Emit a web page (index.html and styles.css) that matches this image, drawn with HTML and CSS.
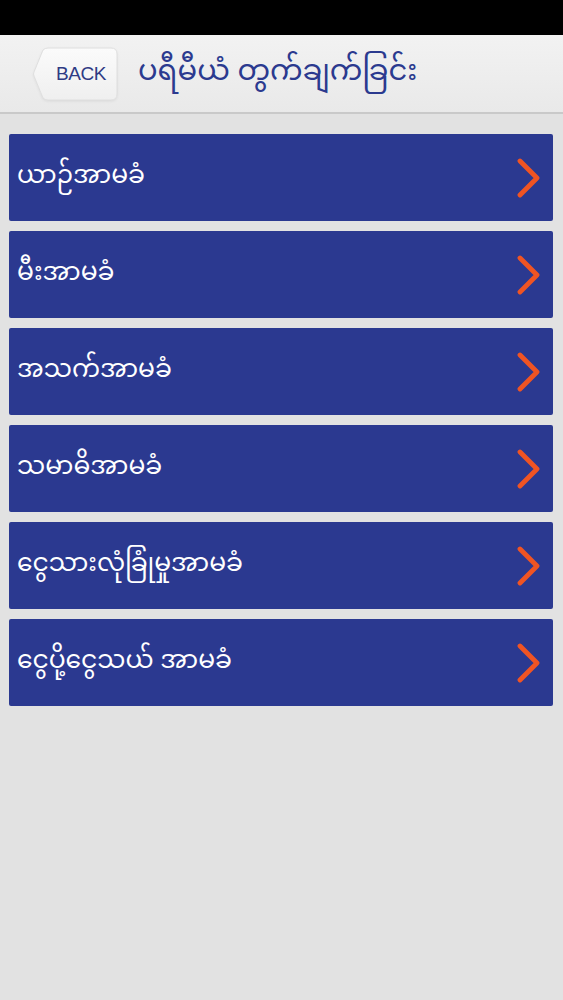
FILE: index.html
```html
<!DOCTYPE html>
<html lang="my">
<head>
    <meta charset="UTF-8">
    <meta name="viewport" content="width=device-width, initial-scale=1.0">
    <title>ပရီမီယံ တွက်ချက်ခြင်း</title>
    <link rel="stylesheet" href="styles.css">
</head>
<body>

<div class="status-bar"></div>

<div class="header">
    <a class="back-btn" href="#">
        <svg class="back-shape" width="88" height="56" viewBox="0 0 88 56">
            <defs>
                <linearGradient id="backGrad" x1="0" y1="0" x2="0" y2="1">
                    <stop offset="0" stop-color="#fbfbfb"/>
                    <stop offset="1" stop-color="#efefef"/>
                </linearGradient>
            </defs>
            <path d="M17 2 H80 Q86 2 86 8 V48 Q86 54 80 54 H17 Q14 54 12 52 L3 30 Q2 28 3 26 L12 4 Q14 2 17 2 Z"
                  fill="url(#backGrad)" stroke="#dedede" stroke-width="1"/>
        </svg>
        <span class="back-label">BACK</span>
    </a>
    <h1 class="title">ပရီမီယံ တွက်ချက်ခြင်း</h1>
</div>

<div class="menu">
    <a class="menu-item" href="#">
        <span class="menu-text">ယာဉ်အာမခံ</span>
        <svg class="chevron" width="24" height="40" viewBox="0 0 24 40"><path d="M3 3 L20 20 L3 37" /></svg>
    </a>
    <a class="menu-item" href="#">
        <span class="menu-text">မီးအာမခံ</span>
        <svg class="chevron" width="24" height="40" viewBox="0 0 24 40"><path d="M3 3 L20 20 L3 37" /></svg>
    </a>
    <a class="menu-item" href="#">
        <span class="menu-text">အသက်အာမခံ</span>
        <svg class="chevron" width="24" height="40" viewBox="0 0 24 40"><path d="M3 3 L20 20 L3 37" /></svg>
    </a>
    <a class="menu-item" href="#">
        <span class="menu-text">သမာဓိအာမခံ</span>
        <svg class="chevron" width="24" height="40" viewBox="0 0 24 40"><path d="M3 3 L20 20 L3 37" /></svg>
    </a>
    <a class="menu-item" href="#">
        <span class="menu-text">ငွေသားလုံခြုံမှုအာမခံ</span>
        <svg class="chevron" width="24" height="40" viewBox="0 0 24 40"><path d="M3 3 L20 20 L3 37" /></svg>
    </a>
    <a class="menu-item" href="#">
        <span class="menu-text">ငွေပို့ငွေသယ် အာမခံ</span>
        <svg class="chevron" width="24" height="40" viewBox="0 0 24 40"><path d="M3 3 L20 20 L3 37" /></svg>
    </a>
</div>

</body>
</html>
```

FILE: styles.css
```css
body {
    margin: 0;
    padding: 0;
    background-color: #e2e2e2;
    font-family: "Noto Sans Myanmar", "Padauk", "Myanmar Text", "Noto Sans", "DejaVu Sans", sans-serif;
    min-height: 1000px;
}
.status-bar {
    height: 35px;
    background-color: #000;
}
.header {
    height: 77px;
    display: flex;
    align-items: center;
    background: linear-gradient(#f2f2f2, #e9e9e9);
    border-bottom: 2px solid #c9c9c9;
}
.back-btn {
    position: relative;
    width: 88px;
    height: 56px;
    margin-left: 31px;
    display: flex;
    align-items: center;
    text-decoration: none;
}
.back-shape {
    position: absolute;
    left: 0;
    top: 0;
    filter: drop-shadow(0 1px 1px rgba(0, 0, 0, 0.06));
}
.back-label {
    position: relative;
    margin-left: 25px;
    font-family: "Liberation Sans", Arial, sans-serif;
    font-size: 19px;
    color: #2f3b84;
    letter-spacing: -0.4px;
}
.title {
    margin: 0 0 0 19px;
    font-size: 29px;
    font-weight: normal;
    color: #2b3a8f;
}
.menu {
    display: flex;
    flex-direction: column;
    gap: 10px;
    padding: 20px 10px 0 9px;
}
.menu-item {
    height: 87px;
    display: flex;
    align-items: center;
    justify-content: space-between;
    padding: 0 12px 0 8px;
    background-color: #2b3990;
    border-radius: 2px;
    text-decoration: none;
}
.menu-text {
    color: #fff;
    font-size: 25px;
}
.chevron {
    fill: none;
    stroke: #f05423;
    stroke-width: 4.8;
    stroke-linecap: round;
    stroke-linejoin: round;
}
```
